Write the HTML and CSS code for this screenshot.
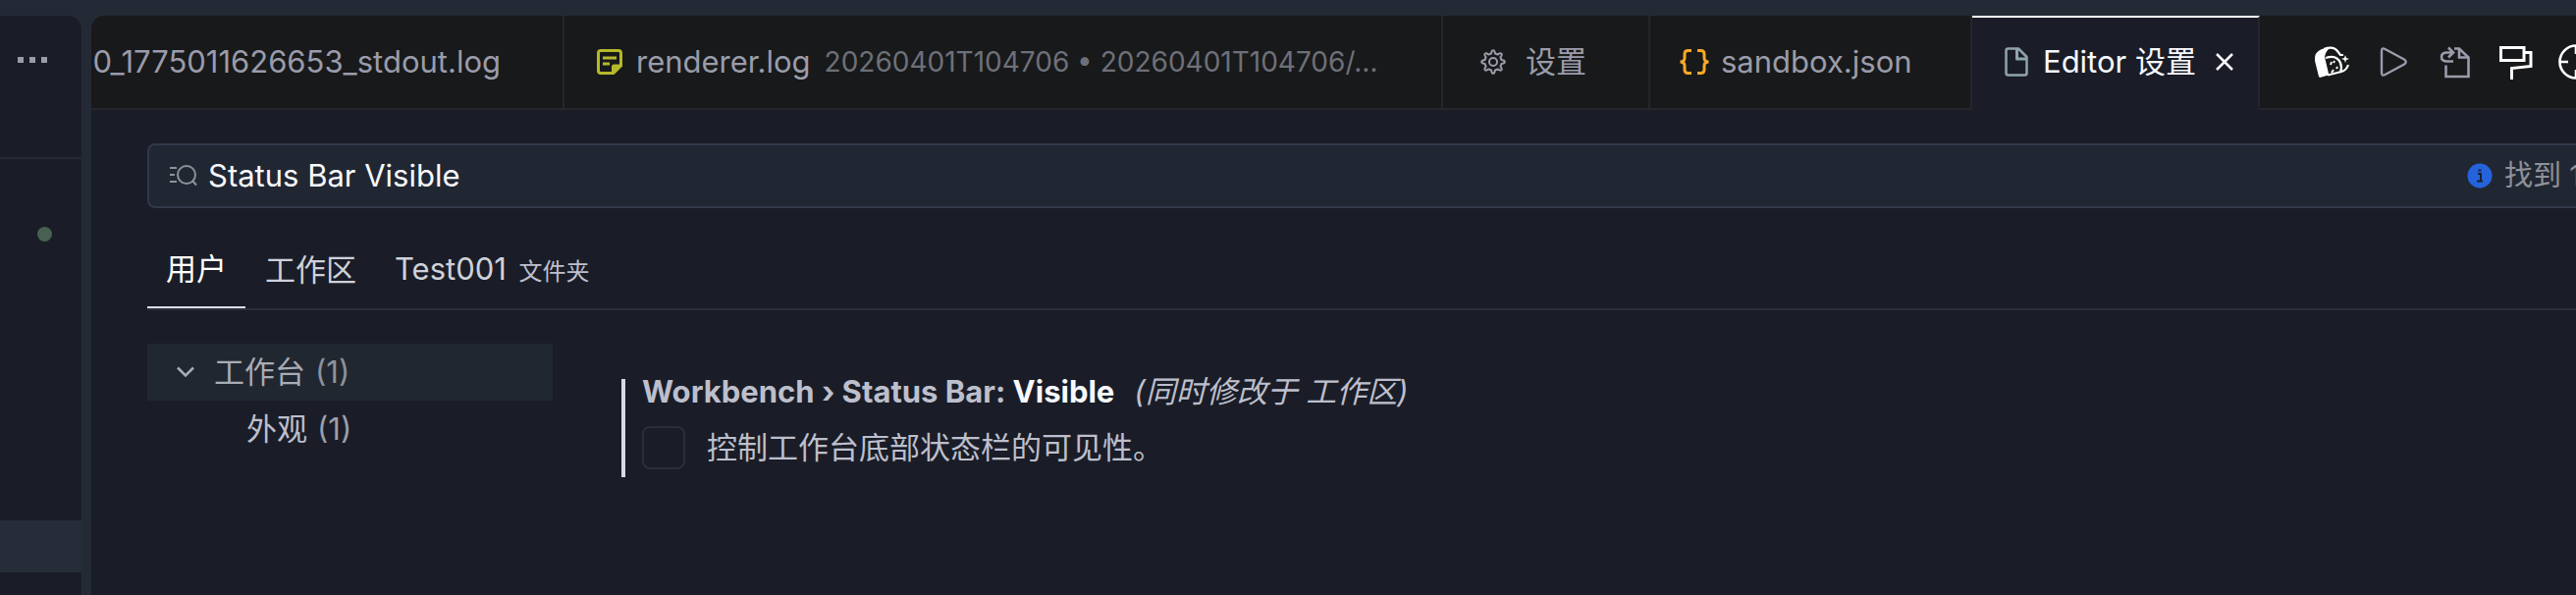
FILE: index.html
```html
<!DOCTYPE html>
<html lang="zh-CN">
<head>
  <meta charset="UTF-8">
  <meta name="viewport" content="width=device-width, initial-scale=1.0">
  <title>Editor 设置</title>
  <link rel="stylesheet" href="styles.css">
</head>
<body>
  <div class="workbench">
    <aside class="sidebar">
      <div class="sidebar-header">
        <button class="icon-button" type="button" aria-label="更多操作">
          <svg width="30" height="6" viewBox="0 0 30 6" fill="currentColor"><path d="M0 0h6v6H0zM12 0h6v6h-6zM24 0h6v6h-6z"/></svg>
        </button>
      </div>
      <div class="sidebar-list">
        <span class="status-dot"></span>
        <div class="sidebar-row"></div>
      </div>
    </aside>

    <main class="editor">
      <div class="tab-bar">
        <div class="tabs">
          <button class="tab tab-cut" type="button"><span>0_1775011626653_stdout.log</span></button>
          <button class="tab tab-log" type="button">
            <svg width="26" height="26" viewBox="0 0 26 26" fill="none" stroke="#b5b82a" stroke-width="3">
              <path d="M16 24.500H4Q1.500 24.500 1.500 22V4Q1.500 1.500 4 1.500H22Q24.500 1.500 24.500 4V16"/>
              <path d="M6 9h14M6 15h7"/>
              <path d="M26 15.500v2L17.500 26H15V18Q15 15.500 17.500 15.500z" fill="#b5b82a" stroke="none"/>
            </svg>
            <span>renderer.log</span>
            <span class="tab-path">20260401T104706 • 20260401T104706/…</span>
          </button>
          <button class="tab tab-settings" type="button">
            <svg width="26" height="26" viewBox="0 0 26 26" fill="none" stroke="currentColor" stroke-width="2" stroke-linejoin="round">
              <path d="M11 4.500Q11.500 1.200 13 1.200T15 4.500L17.600 5.600Q20.300 3.600 21.400 4.700T20.400 8.400L21.500 11Q24.800 11.500 24.800 13T21.500 15L20.400 17.600Q22.400 20.300 21.300 21.300T17.600 20.400L15 21.500Q14.500 24.800 13 24.800T11 21.500L8.400 20.400Q5.700 22.400 4.700 21.300T5.600 17.600L4.500 15Q1.200 14.500 1.200 13T4.500 11L5.600 8.400Q3.600 5.700 4.700 4.700T8.400 5.600z"/>
              <circle cx="13" cy="13" r="4"/>
            </svg>
            <span>设置</span>
          </button>
          <button class="tab tab-json" type="button">
            <svg width="30" height="26" viewBox="0 0 30 26" fill="none" stroke="#f9a825" stroke-width="3">
              <path d="M12 1.500H8.500Q5 1.500 5 5V9Q5 13 0.500 13Q5 13 5 17V21Q5 24.500 8.500 24.500H12M18 1.500h3.500Q25 1.500 25 5V9Q25 13 29.500 13Q25 13 25 17V21Q25 24.500 21.500 24.500H18"/>
            </svg>
            <span>sandbox.json</span>
          </button>
          <div class="tab tab-active">
            <svg width="24" height="30" viewBox="0 0 24 30" fill="none" stroke="#90a4ae" stroke-width="2.500" stroke-linejoin="round">
              <path d="M3.500 1.500H14L22.500 10V26.500Q22.500 28.500 20.500 28.500H3.500Q1.500 28.500 1.500 26.500V3.500Q1.500 1.500 3.500 1.500z"/>
              <path d="M12.500 2v10H22" stroke-width="3"/>
            </svg>
            <span>Editor 设置</span>
            <button class="icon-button close" type="button" aria-label="关闭">
              <svg width="18" height="18" viewBox="0 0 18 18" fill="none" stroke="currentColor" stroke-width="2.500"><path d="M1 1l16 16M17 1L1 17"/></svg>
            </button>
          </div>
        </div>
        <div class="actions">
          <button class="icon-button bright" type="button" aria-label="助手">
            <svg width="38" height="38" viewBox="0 0 38 38" fill="none" stroke="currentColor" stroke-width="2.200">
              <path d="M5 34L1 18Q0 9 8 6L18 4Q12 7 11 14L15 31Q15 33 13 33L6 35z" fill="currentColor" stroke="none"/>
              <path d="M10 6Q20 2.500 24 8L27 12H30"/>
              <path d="M12 15Q23 11 27 20Q29 25 27 30M14 32.500L28 29Q33 28 35 22"/>
              <path d="M18 19l-1 3M21 18l-1 2M20 27l-2 3M24 24l-1 2" stroke-width="2"/>
              <path d="M32 12l1 3 3 1-3 1-1 3-1-3-3-1 3-1z" fill="currentColor" stroke="none"/>
            </svg>
          </button>
          <button class="icon-button" type="button" aria-label="运行">
            <svg width="38" height="38" viewBox="0 0 38 38" fill="none" stroke="currentColor" stroke-width="2.400" stroke-linejoin="round">
              <path d="M7 8Q7 4 10.500 6L30 16.500Q33.500 19 30 21.500L10.500 32Q7 34 7 30z"/>
            </svg>
          </button>
          <button class="icon-button" type="button" aria-label="打开设置文件">
            <svg width="38" height="38" viewBox="0 0 38 38" fill="none" stroke="currentColor" stroke-width="2.600">
              <path d="M19 5.500H24L33.500 14.500V34H10.500V22.500"/>
              <path d="M24 5.500V14.500H33"/>
              <path d="M18 18.500H12Q6 18.500 6 14T12 9.500H17M13 4.500l5 5-5 5"/>
            </svg>
          </button>
          <button class="icon-button bright" type="button" aria-label="格式化">
            <svg width="38" height="38" viewBox="0 0 38 38" fill="none" stroke="currentColor" stroke-width="3">
              <path d="M4.500 4.500H28V17.500H4.500zM28 9.500H35V23.500L15.500 25.500V37"/>
            </svg>
          </button>
          <button class="icon-button bright" type="button" aria-label="定位">
            <svg width="38" height="38" viewBox="0 0 38 38" fill="none" stroke="currentColor" stroke-width="2.600">
              <circle cx="19" cy="19" r="16.500"/>
              <path d="M19 2v9M19 27v9M2 19h9M27 19h9"/>
            </svg>
          </button>
        </div>
      </div>

      <div class="settings">
        <div class="search-box">
          <svg width="30" height="22" viewBox="0 0 30 22" fill="none" stroke="currentColor" stroke-width="2">
            <path d="M1 3h7M1 10h5M1 17h7"/>
            <circle cx="18" cy="10" r="9"/>
            <path d="M24 16l4 4.500"/>
          </svg>
          <input class="search-input" type="text" aria-label="搜索设置" value="Status Bar Visible">
          <div class="search-count">
            <svg width="26" height="26" viewBox="0 0 26 26">
              <circle cx="13" cy="13" r="12.500" fill="#2563dc"/>
              <path d="M11 11h3v7M10 18.500h6M11.500 7.500h3" fill="none" stroke="#1b2030" stroke-width="2"/>
            </svg>
            <span>找到 1</span>
          </div>
        </div>

        <nav class="scopes">
          <button class="scope scope-active" type="button">用户</button>
          <button class="scope" type="button">工作区</button>
          <button class="scope" type="button">Test001 <small>文件夹</small></button>
        </nav>

        <div class="settings-body">
          <ul class="toc">
            <li class="toc-row toc-selected">
              <svg width="18" height="12" viewBox="0 0 18 12" fill="none" stroke="currentColor" stroke-width="2.500"><path d="M1 1.500l8 8 8-8"/></svg>
              <span>工作台</span>
              <span class="count">(1)</span>
            </li>
            <li class="toc-row toc-child">
              <span>外观</span>
              <span class="count">(1)</span>
            </li>
          </ul>

          <section class="setting">
            <div class="setting-title">
              <span>Workbench › Status Bar: <b>Visible</b></span>
              <i>(同时修改于 工作区)</i>
            </div>
            <div class="setting-value">
              <input type="checkbox" id="statusBarVisible">
              <label for="statusBarVisible">控制工作台底部状态栏的可见性。</label>
            </div>
          </section>
        </div>
      </div>
    </main>
  </div>
</body>
</html>
```

FILE: styles.css
```css
* {
  box-sizing: border-box;
}

body {
  margin: 0;
  background: #242a35;
  color: #bdbfcc;
  font-family: Inter, "Noto Sans CJK SC", sans-serif;
  font-size: 31px;
  line-height: 40px;
  overflow: hidden;
}

button,
input {
  font: inherit;
  color: inherit;
  background: none;
  border: none;
  margin: 0;
  padding: 0;
}

button {
  cursor: pointer;
  white-space: nowrap;
}

svg {
  display: block;
  flex: none;
}

.workbench {
  display: flex;
  gap: 10px;
  height: 100vh;
  padding-top: 16px;
}

/* Sidebar */
.sidebar {
  flex: 0 0 83px;
  background: #1a1d27;
  border-top-right-radius: 14px;
}

.sidebar-header {
  height: 146px;
  padding: 42px 18px;
  border-bottom: 2px solid #252a36;
}

.icon-button {
  display: block;
  color: #9a9cab;
}

.sidebar-list {
  display: flex;
  flex-direction: column;
  gap: 284px;
  padding-top: 69px;
}

.status-dot {
  width: 15px;
  height: 15px;
  margin-left: 38px;
  border-radius: 50%;
  background: #466151;
}

.sidebar-row {
  height: 53px;
  background: #272c39;
}

/* Editor tabs */
.editor {
  flex: 1;
  min-width: 0;
  background: #1a1d27;
  border-top-left-radius: 14px;
  overflow: hidden;
}

.tab-bar {
  display: flex;
  height: 96px;
  background: #18191a;
}

.tabs {
  display: flex;
}

.tab {
  display: flex;
  align-items: center;
  padding: 0 30px;
  color: #9a9cab;
  border-right: 2px solid #25262c;
  border-bottom: 2px solid #25262c;
  white-space: nowrap;
}

.tab-cut {
  width: 482px;
  padding-left: 0;
  padding-right: 63px;
  justify-content: flex-end;
  overflow: hidden;
}

.tab-log {
  width: 895px;
  gap: 14px;
  padding-left: 33px;
}

.tab-path {
  color: #6e7079;
  font-size: 28px;
}

.tab-settings {
  width: 211px;
  gap: 20px;
  padding-left: 38px;
}

.tab-json {
  width: 328px;
  gap: 12px;
}

.tab-active {
  width: 293px;
  gap: 15px;
  padding: 0 25px 0 33px;
  background: #1a1d27;
  color: #f8f9ff;
  border-top: 2px solid #fff;
  border-bottom: 4px solid #1a1d27;
}

.tab-active .close {
  margin-left: auto;
  color: #f8f9ff;
}

.actions {
  flex: 1;
  display: flex;
  align-items: center;
  gap: 24px;
  min-width: 0;
  padding-left: 55px;
  border-bottom: 2px solid #25262c;
}

.actions .bright {
  color: #fff;
}

/* Settings page */
.settings {
  padding: 34px 0 0 57px;
}

.search-box {
  display: flex;
  align-items: center;
  gap: 10px;
  height: 66px;
  padding-left: 20px;
  background: #212732;
  border: 2px solid #31384a;
  border-right: none;
  border-radius: 8px 0 0 8px;
  color: #8e919b;
}

.search-input {
  flex: 1;
  min-width: 0;
  color: #f8f9ff;
  outline: none;
}

.search-count {
  display: flex;
  align-items: center;
  gap: 12px;
  width: 111px;
  font-size: 29px;
  white-space: nowrap;
}

.scopes {
  display: flex;
  gap: 1px;
  height: 104px;
  padding-top: 24px;
  border-bottom: 2px solid #292f3c;
}

.scope {
  padding: 0 19px;
  color: #cfd1da;
}

.scope small {
  margin-left: 4px;
  color: #bdbfcc;
  font-size: 24px;
}

.scope-active {
  color: #fff;
  border-bottom: 2px solid #d9dcea;
}

.settings-body {
  display: flex;
  gap: 70px;
  padding-top: 34px;
}

.toc {
  flex: 0 0 413px;
  margin: 0;
  padding: 0;
  list-style: none;
}

.toc-row {
  display: flex;
  align-items: center;
  gap: 10px;
  height: 58px;
  padding-left: 30px;
}

.toc-row svg {
  margin-right: 10px;
}

.toc-selected {
  background: #212731;
  color: #a9acb5;
}

.toc-child {
  padding-left: 101px;
}

.count {
  opacity: 0.8;
}

.setting {
  height: 100px;
  margin-top: 36px;
  padding-left: 17px;
  border-left: 4px solid #d6d9e8;
}

.setting-title {
  display: flex;
  gap: 20px;
  height: 26px;
  align-items: center;
}

.setting-title span,
.setting-title b {
  font-weight: 700;
}

.setting-title b {
  color: #f8f9ff;
}

.setting-value {
  display: flex;
  align-items: center;
  gap: 22px;
  padding-top: 22px;
}

.setting-value input {
  appearance: none;
  width: 44px;
  height: 44px;
  border: 2px solid #292e3b;
  border-radius: 8px;
}
```
